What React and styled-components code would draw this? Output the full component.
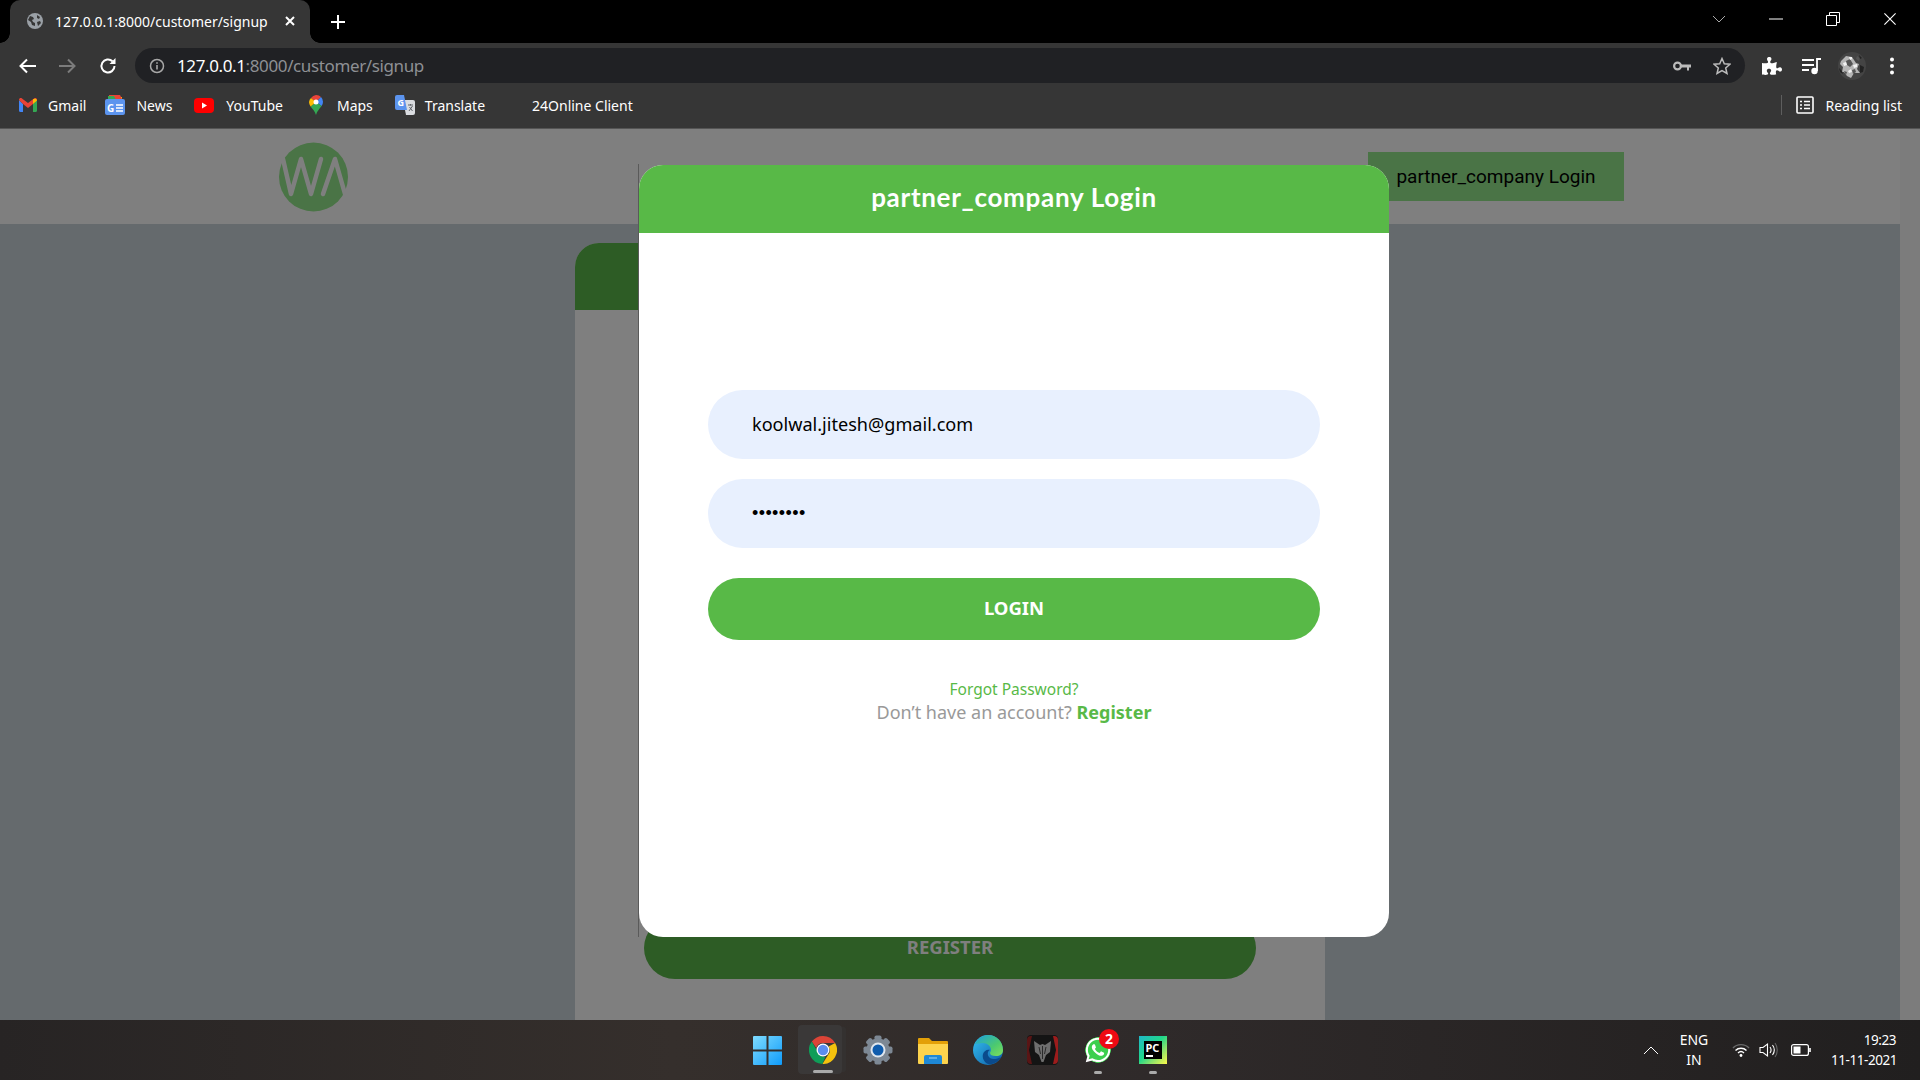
import React from "react";
import styled, { createGlobalStyle } from "styled-components";
import { FaWhatsapp, FaPuzzlePiece } from "react-icons/fa";

const Global = createGlobalStyle`
  html, body { margin: 0; padding: 0; height: 100%; overflow: hidden; background: #000; }
  #root { height: 100%; }
  * { box-sizing: border-box; }
`;

const ui = `"Noto Sans", "Open Sans", sans-serif`;
const form = `"Noto Sans", "Open Sans", sans-serif`;

const Screen = styled.div`
  width: 1920px; height: 1080px; display: flex; flex-direction: column; overflow: hidden;
`;
const TabStrip = styled.div`
  height: 43px; background: #000; display: flex; align-items: flex-end; padding: 0 2px 0 10px; flex: none;
`;
const Tab = styled.div`
  position: relative; width: 300px; height: 43px; background: #363636; border-radius: 10px 10px 0 0;
  display: flex; align-items: center; padding: 0 15px 1px 17px; color: #fff;
  font: 14px ${ui}; gap: 12px;
  &::before, &::after {
    content: ""; position: absolute; bottom: 0; width: 10px; height: 10px;
  }
  &::before { left: -10px; background: radial-gradient(circle at 0 0, transparent 9.5px, #363636 10px); }
  &::after { right: -10px; background: radial-gradient(circle at 100% 0, transparent 9.5px, #363636 10px); }
`;
const TabTitle = styled.span`
  flex: 1; white-space: nowrap;
`;
const NewTab = styled.div`
  width: 56px; height: 43px; display: flex; align-items: center; justify-content: center;
`;
const StripFill = styled.div` flex: 1; `;
const WindowCtl = styled.div`
  width: 57px; height: 43px; display: flex; align-items: center; justify-content: center; padding-bottom: 6px;
`;
const Toolbar = styled.div`
  height: 43px; background: #363636; display: flex; align-items: center; flex: none; padding: 2px 0 0 4px;
`;
const NavButton = styled.div`
  width: ${p => p.$w || 40}px; height: 32px; display: flex; align-items: center; justify-content: center; flex: none;
`;
const Omnibox = styled.div`
  width: 1610px; margin-left: 2px; height: 35px; border-radius: 18px; background: #202124; flex: none;
  display: flex; align-items: center; padding: 0 3px 0 14px; font: 17px ${ui};
`;
const Url = styled.span`
  color: #fff; margin-left: 12px; letter-spacing: -0.38px; flex: 1; white-space: nowrap;
`;
const UrlDim = styled.span` color: #8e9094; `;
const OmniIcon = styled.div`
  width: 40px; display: flex; justify-content: center; align-items: center; flex: none;
`;
const ToolIcons = styled.div`
  display: flex; align-items: center; flex: 1; padding-left: 7px;
`;
const ToolIcon = styled.div`
  width: 40px; display: flex; align-items: center; justify-content: center; flex: none;
`;
const Bookmarks = styled.div`
  height: 43px; background: #363636; display: flex; align-items: center; flex: none;
  padding: 0 18px 4px 19px; color: #fff; font: 14px ${ui}; border-bottom: 1px solid #555;
`;
const Bookmark = styled.div`
  display: flex; align-items: center; gap: ${p => p.$inner}px; margin-right: ${p => p.$gap}px; white-space: nowrap;
`;
const Separator = styled.div`
  width: 1px; height: 20px; background: #5e5e5e; margin: 0 14px 0 auto;
`;

const Viewport = styled.div`
  flex: 1; position: relative; display: flex; background: #cad4da; overflow: hidden; min-height: 0;
`;
const Page = styled.div`
  flex: 1; display: flex; flex-direction: column; min-width: 0;
`;
const SiteHeader = styled.header`
  height: 95px; background: #fff; display: flex; align-items: center; flex: none;
  padding: 0 276px 0 279px; justify-content: space-between;
`;
const HeaderButton = styled.div`
  width: 256px; height: 49px; background: #94e88c; color: #000; font: 19px Roboto, sans-serif;
  display: flex; align-items: center; justify-content: center;
`;
const SignupCard = styled.div`
  width: 750px; flex: 1; margin: 19px auto 0; background: #fff; border-radius: 24px 24px 0 0;
  display: flex; flex-direction: column; align-items: center; overflow: hidden;
`;
const CardHead = styled.div`
  width: 100%; height: 67px; flex: none; background: #5ab84a;
`;
const CardBody = styled.div` flex: 1; `;
const RegisterButton = styled.div`
  width: 612px; height: 62px; border-radius: 31px; background: #5ab84a; color: #fff; flex: none;
  display: flex; align-items: center; justify-content: center; font: 700 18.5px ${form};
  margin-bottom: 41px; padding-bottom: 4px;
`;
const Scrollbar = styled.div`
  width: 20px; background: #f8f8f8; flex: none;
`;
const Overlay = styled.div`
  position: absolute; inset: 0; background: rgba(0,0,0,0.5);
`;
const Dialog = styled.div`
  position: absolute; left: 639px; top: 36px; width: 750px; height: 772px;
  &::before {
    content: ""; position: absolute; left: -1px; top: -1px; bottom: 0; width: 1px; background: #5a5a5a;
  }
`;
const Modal = styled.div`
  width: 100%; height: 100%; background: #fff;
  border-radius: 24px; overflow: hidden; display: flex; flex-direction: column; align-items: center;
`;
const ModalHead = styled.div`
  width: 100%; height: 68px; background: #58b947; color: #fff; flex: none;
  display: flex; align-items: center; justify-content: center;
  font: 700 26px Lato, sans-serif; letter-spacing: 0.7px; padding-bottom: 5px;
`;
const Field = styled.div`
  width: 612px; height: 69px; border-radius: 35px; background: #e8f0fe; color: #000; flex: none;
  display: flex; align-items: center; padding: 0 44px; font: 18.1px ${form}; margin-top: ${p => p.$top}px;
  padding-bottom: ${p => p.$lift}px;
`;
const Dots = styled.span`
  font: 18px Arial, "Liberation Sans", sans-serif; letter-spacing: 0.4px;
`;
const LoginButton = styled.div`
  width: 612px; height: 62px; border-radius: 31px; background: #58b947; color: #fff; flex: none;
  display: flex; align-items: center; justify-content: center; font: 700 18.5px ${form}; margin-top: 30px;
  padding-bottom: 4px;
`;
const Forgot = styled.div`
  color: #58b947; font: 15.5px ${form}; margin-top: 38px; line-height: 22px;
`;
const Account = styled.div`
  color: #999; font: 18px ${form}; line-height: 24px; margin-top: 0;
`;
const RegisterLink = styled.span` color: #58b947; font-weight: 700; `;

const Taskbar = styled.div`
  height: 60px; flex: none; position: relative; display: flex; align-items: center; color: #fff;
  background: linear-gradient(90deg, #272424, #352f2c 35%, #2f2a2a 60%, #211f1f);
  font: 14px ${ui};
`;
const TaskIcons = styled.div`
  position: absolute; left: 740px; top: 0; height: 60px; display: flex; align-items: center;
`;
const TaskSlot = styled.div`
  width: 55px; height: 60px; display: flex; align-items: center; justify-content: center; position: relative; flex: none;
`;
const ActiveTile = styled.div`
  position: absolute; left: 3px; top: 5px; width: 44px; height: 49px; border-radius: 4px;
  background: #3a3838; box-shadow: 6px 0 0 -2px #343130;
`;
const Running = styled.div`
  position: absolute; bottom: ${p => p.$w > 10 ? 7 : 6}px; left: 50%; transform: translateX(-50%);
  width: ${p => p.$w}px; height: 3px; border-radius: 2px; background: #aaa; z-index: 2;
`;
const Badge = styled.div`
  position: absolute; left: 29px; top: 9px; width: 20px; height: 20px; border-radius: 50%;
  background: #ee0a14; color: #fff; font: 700 14px/20px ${ui}; text-align: center; z-index: 2;
`;
const IconLayer = styled.div` position: relative; z-index: 1; display: flex; `;
const WhatsBubble = styled.div`
  width: 28px; height: 28px; border-radius: 50%; display: flex; align-items: center; justify-content: center;
  background: radial-gradient(circle, #3ccf4e 0 12.5px, transparent 13px);
`;
const Tray = styled.div`
  margin-left: auto; display: flex; align-items: center; padding-right: 24px;
`;
const TrayIcon = styled.div`
  width: ${p => p.$w}px; display: flex; justify-content: center; flex: none;
`;
const Lang = styled.div`
  width: 40px; text-align: center; line-height: 20px; font-size: 14px; margin: 0 13px 0 15px;
`;
const Clock = styled.div`
  width: 65px; text-align: right; line-height: 20px; font-size: 13.5px; margin-left: 12px; letter-spacing: -0.45px; white-space: nowrap;
`;
const PcTile = styled.div`
  width: 28px; height: 28px; padding: 5px;
  background: linear-gradient(135deg, #1fb7c9 0%, #21d789 45%, #8fe36a 70%, #fcf84a 100%);
  display: flex;
`;
const PcInner = styled.div`
  flex: 1; background: #000; color: #fff; font: 700 11px/12px ${ui}; padding: 1px 0 0 2px;
  display: flex; flex-direction: column; white-space: nowrap;
`;
const PcDash = styled.div` width: 7px; height: 1.5px; background: #fff; margin-top: 1px; `;

const Globe = () => (
  <svg width="16" height="16" viewBox="0 0 16 16">
    <circle cx="8" cy="8" r="8" fill="#9aa0a6" />
    <path d="M3 3l3 1 1 2-2 1 1 2 2 1v3l-3-1-1-3-3-2zM10 2l3 2-1 2-2-1zM10 9l3-1 1 2-3 3z" fill="#363636" />
  </svg>
);
const Close = ({ c = "#fff", s = 10, w = 1.8 }) => (
  <svg width={s} height={s} viewBox="0 0 10 10"><path d="M1 1l8 8M9 1l-8 8" stroke={c} strokeWidth={w} fill="none" /></svg>
);
const Gmail = () => (
  <svg width="18" height="14" viewBox="0 0 18 14">
    <path d="M0 2v10.500A1.500 1.500 0 0 0 1.500 14H4V6z" fill="#4285f4" />
    <path d="M14 14h2.500a1.500 1.500 0 0 0 1.500-1.500V2l-4 4z" fill="#34a853" />
    <path d="M0 2l4 4 5 4 5-4 4-4c0-2-2-2.500-3-1.500L9 5 3 .5C2-.5 0 0 0 2z" fill="#ea4335" />
    <path d="M14 1.200V6l4-3.500C18 .5 15.500 .2 14 1.200z" fill="#fbbc04" />
  </svg>
);
const News = () => (
  <svg width="20" height="20" viewBox="0 0 20 20">
    <path d="M3 2h14v6H3z" fill="#fbbc04" /><path d="M4 0h11l2 4H4z" fill="#ea4335" /><path d="M3 1h6l2 4H3z" fill="#34a853" />
    <rect x="0" y="4" width="20" height="16" rx="2" fill="#5c94ee" />
    <text x="2" y="16.500" fill="#fff" fontFamily="Noto Sans" fontSize="10" fontWeight="700">G</text>
    <path d="M11 10h7M11 13h7M11 16h7" stroke="#fff" strokeWidth="1.500" />
  </svg>
);
const Youtube = () => (
  <svg width="20" height="15" viewBox="0 0 20 15">
    <rect width="20" height="15" rx="4" fill="#f00" /><path d="M8 4.500l5 3-5 3z" fill="#fff" />
  </svg>
);
const MapPin = () => (
  <svg width="14" height="20" viewBox="0 0 14 20">
    <path d="M2 3A7 7 0 0 1 7 0a7 7 0 0 1 5 2L7 7z" fill="#e9443a" />
    <path d="M12 2a7 7 0 0 1 .6 9L7 7z" fill="#4285f4" />
    <path d="M1.600 11.400C3.500 14 6 16 7 20c1-4 3.500-6 5.600-9L7 7z" fill="#34a853" />
    <path d="M0 7a7 7 0 0 1 2-4l5 4-5.400 4.400A7 7 0 0 1 0 7z" fill="#fbbc04" />
    <circle cx="7" cy="7" r="2.500" fill="#fff" />
  </svg>
);
const Translate = () => (
  <svg width="20" height="20" viewBox="0 0 20 20">
    <path d="M8 5h10a2 2 0 0 1 2 2v11a2 2 0 0 1-2 2h-7z" fill="#dadce0" />
    <path d="M2 0h7l3 15H2a2 2 0 0 1-2-2V2a2 2 0 0 1 2-2z" fill="#5c94ee" />
    <text x="2.500" y="10.500" fill="#fff" fontFamily="Noto Sans" fontSize="9" fontWeight="700">G</text>
    <path d="M13 10h5M15.500 9v1.500M14 16l3.500-5M14.500 12l3 4" stroke="#5f6368" strokeWidth="1" fill="none" />
  </svg>
);
const AvatarPhoto = () => (
  <svg width="28" height="28" viewBox="0 0 28 28">
    <circle cx="14" cy="14" r="14" fill="#444" />
    <path d="M3 9l5-5 6 1 4 6 3 1-2 5 3 4-6 0-3 5-4-2-3-4-2 0 1-5-3-3z" fill="#b5b5b5" />
    <path d="M8 9l4-2 3 5-3 3-3-2zM14 18l3-1 1 3-3 2zM19 4l3 2-1 3-3-2zM6 19l3 1-1 3z" fill="#555" />
    <path d="M5 11l3-1 1 3-3 1zM11 5l3 0 0 2-2 1zM15 13l4-1 0 3-3 1zM10 19l3-2 1 3-3 1z" fill="#f2f2f2" />
    <path d="M22 13l4 2-1 5-3 1zM1 16l3 3 1 3-3-2zM21 3l3 3-2 1z" fill="#222" />
  </svg>
);
const ChromeLogo = ({ s = 28 }) => (
  <svg width={s} height={s} viewBox="0 0 28 28">
    <path d="M14 0a14 14 0 0 1 12.100 7H14a7 7 0 0 0-6.700 4.900L2.800 5.600A14 14 0 0 1 14 0z" fill="#db4437" />
    <path d="M26.100 7A14 14 0 0 1 13.400 28l5.600-9a7 7 0 0 0 .6-8.500z" fill="#f4c20d" />
    <path d="M2.800 5.600l5.700 10a7 7 0 0 0 8 5L13.400 28A14 14 0 0 1 2.800 5.600z" fill="#0f9d58" />
    <circle cx="14" cy="14" r="6.500" fill="#fff" /><circle cx="14" cy="14" r="5.200" fill="#5b8def" />
  </svg>
);
const Edge = () => (
  <svg width="30" height="30" viewBox="0 0 30 30">
    <defs>
      <linearGradient id="e1" x1="0" y1="0" x2="1" y2="1"><stop offset="0" stopColor="#35c1f1" /><stop offset="1" stopColor="#0c59a4" /></linearGradient>
      <linearGradient id="e2" x1="0" y1="0" x2="1" y2="1"><stop offset="0" stopColor="#1ba0e0" /><stop offset="0.6" stopColor="#4cc96f" /><stop offset="1" stopColor="#7fe05c" /></linearGradient>
    </defs>
    <circle cx="15" cy="15" r="15" fill="url(#e1)" />
    <path d="M2 9C5 2 12 0 15 0c9 0 15 7 15 15 0 4-3 6-7 6-4 0-6-1-6-3 0-1 1-1.500 1-3 0-4-4-7-8-7-4 0-6 1-8 1z" fill="url(#e2)" />
    <path d="M15 29c-4-2-6-6-5-10 1-3 4-5 7-4-3 1-3 6 0 8 3 2 8 1 11-1-3 5-8 8-13 7z" fill="#0a4a8c" />
  </svg>
);
const Gear = () => (
  <svg width="30" height="30" viewBox="0 0 30 30">
    {[0, 45, 90, 135, 180, 225, 270, 315].map(a => (
      <rect key={a} x="11.500" y="0.500" width="7" height="7" rx="1.800" fill="#7d8894" transform={`rotate(${a} 15 15)`} />
    ))}
    <circle cx="15" cy="15" r="11.500" fill="#7d8894" />
    <circle cx="15" cy="15" r="7.500" fill="#dfe6ee" /><circle cx="15" cy="15" r="5.500" fill="#0f5cad" />
  </svg>
);
const Folder = () => (
  <svg width="30" height="27" viewBox="0 0 30 27">
    <path d="M0 2a1 1 0 0 1 1-1h10l3 3h15a1 1 0 0 1 1 1v4H0z" fill="#e3a008" />
    <path d="M0 7h30v19a1 1 0 0 1-1 1H1a1 1 0 0 1-1-1z" fill="#fcd34d" />
    <path d="M6 27v-7a2 2 0 0 1 2-2h14a2 2 0 0 1 2 2v7z" fill="#1e88d6" />
    <path d="M11 21h8" stroke="#9fd4f5" strokeWidth="1" />
  </svg>
);
const Predator = () => (
  <svg width="31" height="30" viewBox="0 0 31 30">
    <rect width="31" height="30" rx="4" fill="#141414" />
    <path d="M0 5q0-4 4-4h1L2 15l3 14H4q-4 0-4-4z" fill="#5a1515" />
    <path d="M31 5q0-4-4-4h-1l3 14-3 14h1q4 0 4-4z" fill="#9c1c1c" />
    <path d="M7 6l6 4 2.500-1L18 10l6-4-1 11-4 3-2.500 7h-2L12 20l-4-3z" fill="#6e6e6e" />
    <path d="M12 12l1.500 7M19 12l-1.500 7M15.500 11v13" stroke="#2a2a2a" strokeWidth="1" />
  </svg>
);
const WinLogo = () => (
  <svg width="29" height="29" viewBox="0 0 29 29">
    <defs><linearGradient id="w" x1="0" y1="0" x2="1" y2="1"><stop offset="0" stopColor="#7fdcff" /><stop offset="1" stopColor="#0f9bfa" /></linearGradient></defs>
    <path d="M0 1a1 1 0 0 1 1-1h12.500v13.500H0zM15.500 0H28a1 1 0 0 1 1 1v12.500H15.500zM0 15.500h13.500V29H1a1 1 0 0 1-1-1zM15.500 15.500H29V28a1 1 0 0 1-1 1H15.500z" fill="url(#w)" />
  </svg>
);
const Logo = () => (
  <svg width="69" height="70" viewBox="0 0 69 70">
    <circle cx="34.500" cy="35" r="34.500" fill="#94e88c" />
    <path d="M4 17l8 35 10-35 10 35 10-35M44 52l12-35 10 35" stroke="#fff" strokeWidth="4.500" fill="none" strokeLinecap="round" strokeLinejoin="round" />
  </svg>
);

export default function App() {
  return (
    <Screen>
      <Global />
      <TabStrip>
        <Tab>
          <Globe />
          <TabTitle>127.0.0.1:8000/customer/signup</TabTitle>
          <Close s={10} w={2} />
        </Tab>
        <NewTab>
          <svg width="16" height="16" viewBox="0 0 16 16"><path d="M8 1v14M1 8h14" stroke="#fff" strokeWidth="2" /></svg>
        </NewTab>
        <StripFill />
        <WindowCtl>
          <svg width="14" height="8" viewBox="0 0 14 8"><path d="M1 1l6 6 6-6" stroke="#aaa" strokeWidth="1" fill="none" /></svg>
        </WindowCtl>
        <WindowCtl>
          <svg width="14" height="2" viewBox="0 0 14 2"><path d="M0 1h14" stroke="#fff" strokeWidth="1" /></svg>
        </WindowCtl>
        <WindowCtl>
          <svg width="14" height="14" viewBox="0 0 14 14"><path d="M.5 3.500h10v10H.5zM3.500 3.500V.5h10v10h-3" stroke="#fff" strokeWidth="1" fill="none" /></svg>
        </WindowCtl>
        <WindowCtl>
          <Close s={14} w={0.8} />
        </WindowCtl>
      </TabStrip>
      <Toolbar>
        <NavButton $w={47}>
          <svg width="18" height="16" viewBox="0 0 18 16"><path d="M17 8H2M8 1.500L1.500 8 8 14.500" stroke="#fff" strokeWidth="2" fill="none" /></svg>
        </NavButton>
        <NavButton $w={32}>
          <svg width="18" height="16" viewBox="0 0 18 16"><path d="M1 8h15M10 1.500L16.500 8 10 14.500" stroke="#7c7c7c" strokeWidth="2" fill="none" /></svg>
        </NavButton>
        <NavButton $w={50}>
          <svg width="18" height="18" viewBox="0 0 18 18"><path d="M15.500 9a6.500 6.500 0 1 1-2-4.700" stroke="#fff" strokeWidth="2" fill="none" /><path d="M16.500 1v6h-6z" fill="#fff" /></svg>
        </NavButton>
        <Omnibox>
          <svg width="16" height="16" viewBox="0 0 16 16"><circle cx="8" cy="8" r="6.500" stroke="#a8a8a8" strokeWidth="1.500" fill="none" /><path d="M8 7v4.500M8 4.200v1.600" stroke="#a8a8a8" strokeWidth="1.600" /></svg>
          <Url>127.0.0.1<UrlDim>:8000/customer/signup</UrlDim></Url>
          <OmniIcon>
            <svg width="18" height="10" viewBox="0 0 18 10"><circle cx="4.500" cy="5" r="3.400" stroke="#bbb" strokeWidth="2.200" fill="none" /><path d="M8 3.500h10v3h-2v3h-2v-3H8z" fill="#bbb" /></svg>
          </OmniIcon>
          <OmniIcon>
            <svg width="18" height="18" viewBox="0 0 18 18"><path d="M9 1.500l2.300 5.200 5.700.5-4.300 3.700 1.300 5.600L9 13.600l-5 2.900 1.300-5.600L1 7.200l5.700-.5z" stroke="#bbb" strokeWidth="1.500" fill="none" /></svg>
          </OmniIcon>
        </Omnibox>
        <ToolIcons>
          <ToolIcon><FaPuzzlePiece size={20} color="#fff" /></ToolIcon>
          <ToolIcon>
            <svg width="20" height="18" viewBox="0 0 20 18"><path d="M0 3h12M0 8h12M0 13h7" stroke="#fff" strokeWidth="1.800" /><path d="M15 14V2h4" stroke="#fff" strokeWidth="1.800" fill="none" /><circle cx="12.500" cy="14" r="3.200" fill="#fff" /></svg>
          </ToolIcon>
          <ToolIcon><AvatarPhoto /></ToolIcon>
          <ToolIcon>
            <svg width="6" height="18" viewBox="0 0 6 18"><circle cx="3" cy="2.500" r="2" fill="#fff" /><circle cx="3" cy="9" r="2" fill="#fff" /><circle cx="3" cy="15.500" r="2" fill="#fff" /></svg>
          </ToolIcon>
        </ToolIcons>
      </Toolbar>
      <Bookmarks>
        <Bookmark $inner={11} $gap={19}><Gmail />Gmail</Bookmark>
        <Bookmark $inner={11} $gap={22}><News />News</Bookmark>
        <Bookmark $inner={12} $gap={26}><Youtube />YouTube</Bookmark>
        <Bookmark $inner={14} $gap={22}><MapPin />Maps</Bookmark>
        <Bookmark $inner={10} $gap={47}><Translate />Translate</Bookmark>
        <Bookmark $inner={0} $gap={0}>24Online Client</Bookmark>
        <Separator />
        <Bookmark $inner={11} $gap={0}>
          <svg width="18" height="18" viewBox="0 0 18 18"><rect x="1" y="1" width="16" height="16" rx="1" stroke="#fff" strokeWidth="1.600" fill="none" /><path d="M4 5.500h2M8 5.500h6M4 9h2M8 9h6M4 12.500h2M8 12.500h6" stroke="#fff" strokeWidth="1.500" /></svg>
          <span>Reading list</span>
        </Bookmark>
      </Bookmarks>
      <Viewport>
        <Page>
          <SiteHeader>
            <Logo />
            <HeaderButton>partner_company Login</HeaderButton>
          </SiteHeader>
          <SignupCard>
            <CardHead />
            <CardBody />
            <RegisterButton>REGISTER</RegisterButton>
          </SignupCard>
        </Page>
        <Scrollbar />
        <Overlay />
        <Dialog>
          <Modal>
            <ModalHead>partner_company Login</ModalHead>
            <Field $top={157} $lift={2}>koolwal.jitesh@gmail.com</Field>
            <Field $top={20} $lift={0}><Dots>••••••••</Dots></Field>
            <LoginButton>LOGIN</LoginButton>
            <Forgot>Forgot Password?</Forgot>
            <Account>Don’t have an account? <RegisterLink>Register</RegisterLink></Account>
          </Modal>
        </Dialog>
      </Viewport>
      <Taskbar>
        <TaskIcons>
          <TaskSlot><WinLogo /></TaskSlot>
          <TaskSlot>
            <ActiveTile />
            <IconLayer><ChromeLogo /></IconLayer>
            <Running $w={20} />
          </TaskSlot>
          <TaskSlot><Gear /></TaskSlot>
          <TaskSlot><Folder /></TaskSlot>
          <TaskSlot><Edge /></TaskSlot>
          <TaskSlot><Predator /></TaskSlot>
          <TaskSlot>
            <WhatsBubble><FaWhatsapp size={28} color="#fff" /></WhatsBubble>
            <Badge>2</Badge>
            <Running $w={8} />
          </TaskSlot>
          <TaskSlot>
            <PcTile>
              <PcInner>PC<PcDash /></PcInner>
            </PcTile>
            <Running $w={8} />
          </TaskSlot>
        </TaskIcons>
        <Tray>
          <TrayIcon $w={16}>
            <svg width="16" height="9" viewBox="0 0 16 9"><path d="M1 8l7-7 7 7" stroke="#fff" strokeWidth="1" fill="none" /></svg>
          </TrayIcon>
          <Lang>ENG<br />IN</Lang>
          <TrayIcon $w={28}>
            <svg width="18" height="14" viewBox="0 0 18 14"><path d="M1 5c4-4.500 12-4.500 16 0" stroke="#6a6a6a" strokeWidth="1.400" fill="none" /><path d="M3.500 7.500c3-3 8-3 11 0M6 10c1.800-1.700 4.200-1.700 6 0" stroke="#fff" strokeWidth="1.400" fill="none" /><circle cx="9" cy="12.500" r="1.400" fill="#fff" /></svg>
          </TrayIcon>
          <TrayIcon $w={28}>
            <svg width="20" height="16" viewBox="0 0 20 16"><path d="M1 5.500h3L8.500 2v12L4 10.500H1z" stroke="#fff" strokeWidth="1.100" fill="none" /><path d="M11 5c1.300 1.800 1.300 4.200 0 6M13.500 3c2.200 3 2.200 7 0 10" stroke="#fff" strokeWidth="1.100" fill="none" /><path d="M16 1c3 4 3 10 0 14" stroke="#666" strokeWidth="1.100" fill="none" /></svg>
          </TrayIcon>
          <TrayIcon $w={36}>
            <svg width="20" height="12" viewBox="0 0 20 12"><rect x=".6" y=".6" width="16.800" height="10.800" rx="2" stroke="#fff" strokeWidth="1.200" fill="none" /><rect x="2.500" y="2.500" width="7" height="7" fill="#fff" /><rect x="18.200" y="4" width="1.600" height="4" fill="#fff" /></svg>
          </TrayIcon>
          <Clock>19:23<br />11-11-2021</Clock>
        </Tray>
      </Taskbar>
    </Screen>
  );
}
